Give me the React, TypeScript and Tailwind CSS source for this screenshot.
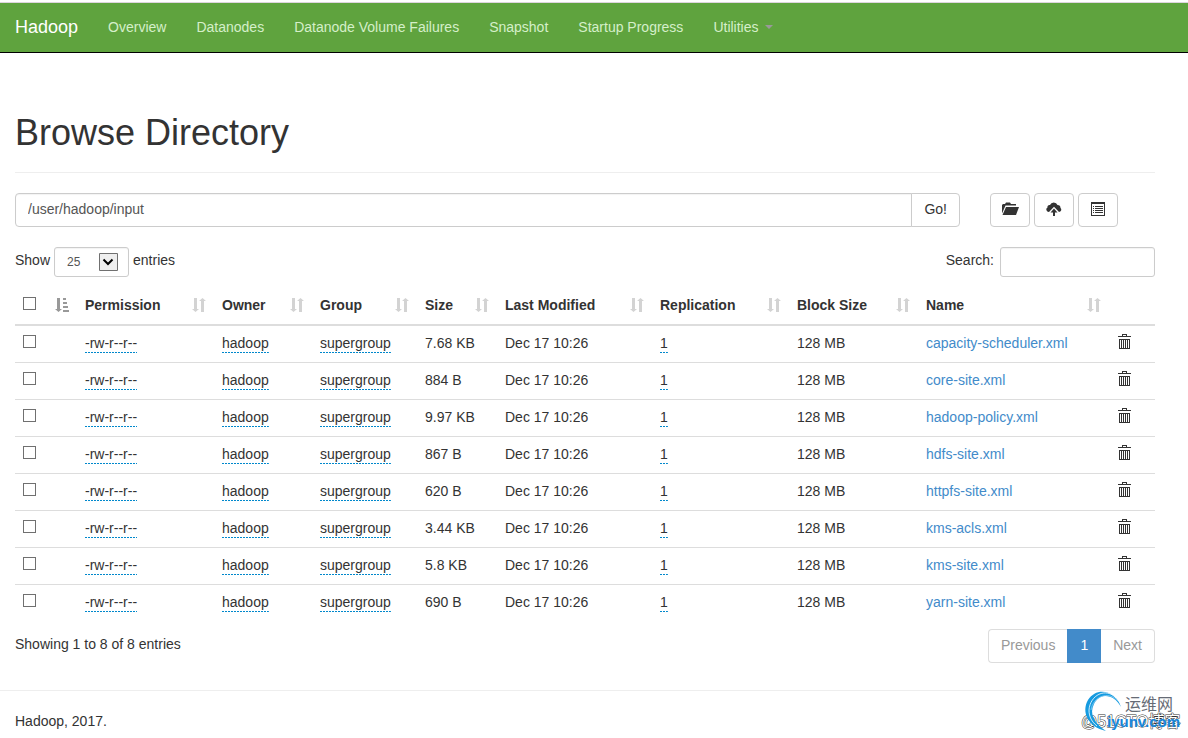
import type { ReactNode } from 'react'

interface FileEntry {
  name: string
  size: string
}

const files: FileEntry[] = [
  { name: 'capacity-scheduler.xml', size: '7.68 KB' },
  { name: 'core-site.xml', size: '884 B' },
  { name: 'hadoop-policy.xml', size: '9.97 KB' },
  { name: 'hdfs-site.xml', size: '867 B' },
  { name: 'httpfs-site.xml', size: '620 B' },
  { name: 'kms-acls.xml', size: '3.44 KB' },
  { name: 'kms-site.xml', size: '5.8 KB' },
  { name: 'yarn-site.xml', size: '690 B' },
]

const navLinks = ['Overview', 'Datanodes', 'Datanode Volume Failures', 'Snapshot', 'Startup Progress']

const columns = [
  { label: 'Permission', width: 'w-[137px]' },
  { label: 'Owner', width: 'w-[98px]' },
  { label: 'Group', width: 'w-[105px]' },
  { label: 'Size', width: 'w-[80px]' },
  { label: 'Last Modified', width: 'w-[155px]' },
  { label: 'Replication', width: 'w-[137px]' },
  { label: 'Block Size', width: 'w-[129px]' },
  { label: 'Name', width: 'w-[191px]' },
]

function SortIcon() {
  return (
    <svg width="14" height="14" viewBox="0 0 14 14" fill="#d3d3d3" aria-hidden="true">
      <path d="M2 0h3v11h2l-3.500 3L0 11h2z" />
      <path d="M9 14h3V3h2l-3.500-3L7 3h2z" />
    </svg>
  )
}

function SortAscIcon() {
  return (
    <svg width="14" height="14" viewBox="0 0 14 14" fill="#999" aria-hidden="true">
      <path d="M2 0h3v11h2l-3.500 3L0 11h2z" />
      <path d="M8 0h3v2H8zM8 4h4v2H8zM8 8h5v2H8zM8 12h6v2H8z" />
    </svg>
  )
}

function FolderOpenIcon() {
  return (
    <svg width="18" height="14" viewBox="0 0 18 14" fill="#333" aria-hidden="true">
      <path d="M1 11.500V3l1-1h2l1-1.500h4L10 2h5v1.500H4.500z" />
      <path d="M5 5h13l-3 8H1.500z" />
    </svg>
  )
}

function CloudUploadIcon() {
  return (
    <svg width="16" height="14" viewBox="0 0 16 14" fill="#333" aria-hidden="true">
      <path d="M3 10a2.500 2.500 0 0 1-1.500-4.600A2 2 0 0 1 4 3 4 4 0 0 1 11.500 3 3 3 0 0 1 14.500 6a2.300 2.300 0 0 1-1.500 4L8 4.800z" />
      <path d="M8 6.500l3.500 4H9V14H7v-3.500H4.500z" />
    </svg>
  )
}

function ListIcon() {
  return (
    <svg width="14" height="14" viewBox="0 0 14 14" fill="#333" aria-hidden="true">
      <path fillRule="evenodd" d="M0 0h14v14H0zM1 2v11h12V2z" />
      <path d="M2 4h1v1H2zM4 4h8v1H4zM2 6h1v1H2zM4 6h8v1H4zM2 8h1v1H2zM4 8h8v1H4zM2 10h1v1H2zM4 10h8v1H4z" />
    </svg>
  )
}

function TrashIcon() {
  return (
    <svg width="15" height="16" viewBox="0 0 15 16" fill="#333" aria-hidden="true">
      <path d="M5 2V0h5v2h4v1H1V2zM6 1v1h3V1z" fillRule="evenodd" />
      <path fillRule="evenodd" d="M2 5h11v10H2zM3 6v8h1V6zM5 6v8h1V6zM7 6v8h1V6zM9 6v8h1V6zM11 6v8h1V6z" />
    </svg>
  )
}

function Checkbox({ label }: { label: string }) {
  return (
    <input
      type="checkbox"
      aria-label={label}
      className="block size-[13px] appearance-none border border-[#707070] bg-white checked:bg-[#707070]"
    />
  )
}

function Editable({ children }: { children: ReactNode }) {
  return (
    <button
      type="button"
      className="block bg-[repeating-linear-gradient(90deg,#0088cc_0_2px,transparent_2px_3px)] bg-[length:100%_1px] bg-bottom bg-no-repeat leading-5"
    >
      {children}
    </button>
  )
}

function IconButton({ label, children }: { label: string; children: ReactNode }) {
  return (
    <button
      type="button"
      aria-label={label}
      className="flex h-[34px] w-10 items-center justify-center rounded border border-[#ccc] bg-white pb-[3px]"
    >
      {children}
    </button>
  )
}

function Navbar() {
  return (
    <nav className="mt-0.5 flex h-[51px] items-start border-t border-b border-t-[#ddd5dd] border-b-black bg-[#5fa33e]">
      <a href="#" className="px-[15px] pt-[14px] text-lg leading-5 text-white">
        Hadoop
      </a>
      {navLinks.map((link) => (
        <a key={link} href="#" className="px-[15px] pt-[14px] leading-5 text-[#d5efc9]">
          {link}
        </a>
      ))}
      <button type="button" className="flex items-center gap-1.5 px-[15px] pt-[14px] leading-5 text-[#d5efc9]">
        Utilities
        <span className="border-x-4 border-t-4 border-x-transparent border-t-[#999]" />
      </button>
    </nav>
  )
}

function FileTable() {
  return (
    <table className="mt-2 w-full table-fixed border-collapse text-left">
      <thead>
        <tr className="h-10 border-b-2 border-[#ddd]">
          <th className="w-[62px] px-2">
            <div className="flex items-center justify-between">
              <div className="pb-0.5">
                <Checkbox label="Select all files" />
              </div>
              <SortAscIcon />
            </div>
          </th>
          {columns.map((column) => (
            <th key={column.label} className={`${column.width} px-2 font-bold`}>
              <div className="flex items-center justify-between whitespace-nowrap">
                {column.label}
                <SortIcon />
              </div>
            </th>
          ))}
          <th className="w-[46px]" aria-label="Actions" />
        </tr>
      </thead>
      <tbody>
        {files.map((file) => (
          <tr key={file.name} className="h-[37px] border-b border-[#ddd] last:border-b-0">
            <td className="px-2 pb-1">
              <Checkbox label={`Select ${file.name}`} />
            </td>
            <td className="px-2 pb-0.5">
              <Editable>-rw-r--r--</Editable>
            </td>
            <td className="px-2 pb-0.5">
              <Editable>hadoop</Editable>
            </td>
            <td className="px-2 pb-0.5">
              <Editable>supergroup</Editable>
            </td>
            <td className="px-2 pb-0.5">{file.size}</td>
            <td className="px-2 pb-0.5">Dec 17 10:26</td>
            <td className="px-2 pb-0.5">
              <Editable>1</Editable>
            </td>
            <td className="px-2 pb-0.5">128 MB</td>
            <td className="px-2 pb-0.5">
              <a href="#" className="text-[#428bca]">
                {file.name}
              </a>
            </td>
            <td className="px-2">
              <button type="button" aria-label={`Delete ${file.name}`} className="block pb-1">
                <TrashIcon />
              </button>
            </td>
          </tr>
        ))}
      </tbody>
    </table>
  )
}

function Watermark() {
  return (
    <div className="absolute right-0 bottom-0 h-[52px] w-[108px]" aria-hidden="true">
      <svg width="108" height="52" viewBox="0 0 108 52">
        <text
          x="1"
          y="41"
          fontSize="16"
          fill="#fff"
          stroke="#333"
          strokeWidth="1"
          paintOrder="stroke"
          fontFamily="'Liberation Sans', 'Noto Sans CJK SC', sans-serif"
        >
          @51CTO博客
        </text>
        <path d="M41 21C36 5 17 0 8 14C1 26 8 41 26 45C14 37 9 28 14 18C20 6 34 8 41 21z" fill="#169be0" />
        <path d="M36 12C26 1 10 9 9 24C9 31 12 36 17 40" fill="none" stroke="#fff" strokeWidth="0.8" />
        <path d="M38 15C28 4 13 11 11 24" fill="none" stroke="#8fd0f2" strokeWidth="0.8" />
        <text x="45" y="24" fontSize="16" fill="#666b75" fontFamily="'Noto Sans CJK SC', sans-serif">
          运维网
        </text>
        <text x="27" y="41" fontSize="15" fontWeight="bold" fill="#1686d9" fontFamily="'Liberation Sans', Arial, sans-serif">
          iyunv.com
        </text>
      </svg>
    </div>
  )
}

export default function App() {
  return (
    <div className="relative flow-root min-h-screen bg-white font-['Liberation_Sans',Arial,sans-serif] text-sm leading-5 text-[#333]">
      <Navbar />
      <main className="pr-[33px] pl-[15px]">
        <h1 className="border-b border-[#eee] pt-[60px] pb-5 text-4xl leading-[39px]">Browse Directory</h1>

        <div className="mt-5 flex">
          <form className="flex min-w-0 flex-1">
            <input
              type="text"
              aria-label="Directory path"
              defaultValue="/user/hadoop/input"
              className="h-[34px] min-w-0 flex-1 rounded-l border border-[#ccc] px-3 pb-0.5 text-[#555] inset-shadow-xs"
            />
            <button type="button" className="-ml-px h-[34px] rounded-r border border-[#ccc] bg-white px-3 pb-0.5">
              Go!
            </button>
          </form>
          <div className="mr-[37px] ml-[30px] flex gap-1">
            <IconButton label="Create directory">
              <FolderOpenIcon />
            </IconButton>
            <IconButton label="Upload files">
              <CloudUploadIcon />
            </IconButton>
            <IconButton label="Cut and paste">
              <ListIcon />
            </IconButton>
          </div>
        </div>

        <div className="mt-5 flex justify-between">
          <label className="flex gap-1">
            <span className="pt-[3px]">Show</span>
            <span className="relative">
              <select className="h-[30px] w-[75px] appearance-none rounded-[3px] border border-[#ccc] bg-white px-3 text-xs text-[#555] inset-shadow-xs">
                <option>25</option>
              </select>
              <svg className="pointer-events-none absolute top-1.5 right-[11px]" width="19" height="18" viewBox="0 0 19 18" aria-hidden="true">
                <path d="M.5.5h18v17H.5z" fill="#eee" stroke="#707070" />
                <path d="M4.500 6.500l4.500 4.500L13.500 6.500" fill="none" stroke="#000" strokeWidth="2" />
              </svg>
            </span>
            <span className="pt-[3px]">entries</span>
          </label>
          <label className="flex gap-1.5">
            <span className="pt-[3px]">Search:</span>
            <input type="search" className="h-[30px] w-[155px] rounded-[3px] border border-[#ccc] px-2.5 text-xs inset-shadow-xs" />
          </label>
        </div>

        <FileTable />

        <div className="mt-2 flex items-start justify-between">
          <p className="pt-[5px]">Showing 1 to 8 of 8 entries</p>
          <div className="flex h-[34px] text-[#999]">
            <button type="button" className="rounded-l border border-r-0 border-[#ddd] px-3 pb-0.5">
              Previous
            </button>
            <button type="button" aria-current="page" className="bg-[#428bca] px-[13px] pb-0.5 text-white">
              1
            </button>
            <button type="button" className="rounded-r border border-l-0 border-[#ddd] px-3 pb-0.5">
              Next
            </button>
          </div>
        </div>
      </main>

      <footer className="mt-[27px] mr-[18px] border-t border-[#eee] pt-5 pl-[15px]">
        <p>Hadoop, 2017.</p>
      </footer>
      <Watermark />
    </div>
  )
}
